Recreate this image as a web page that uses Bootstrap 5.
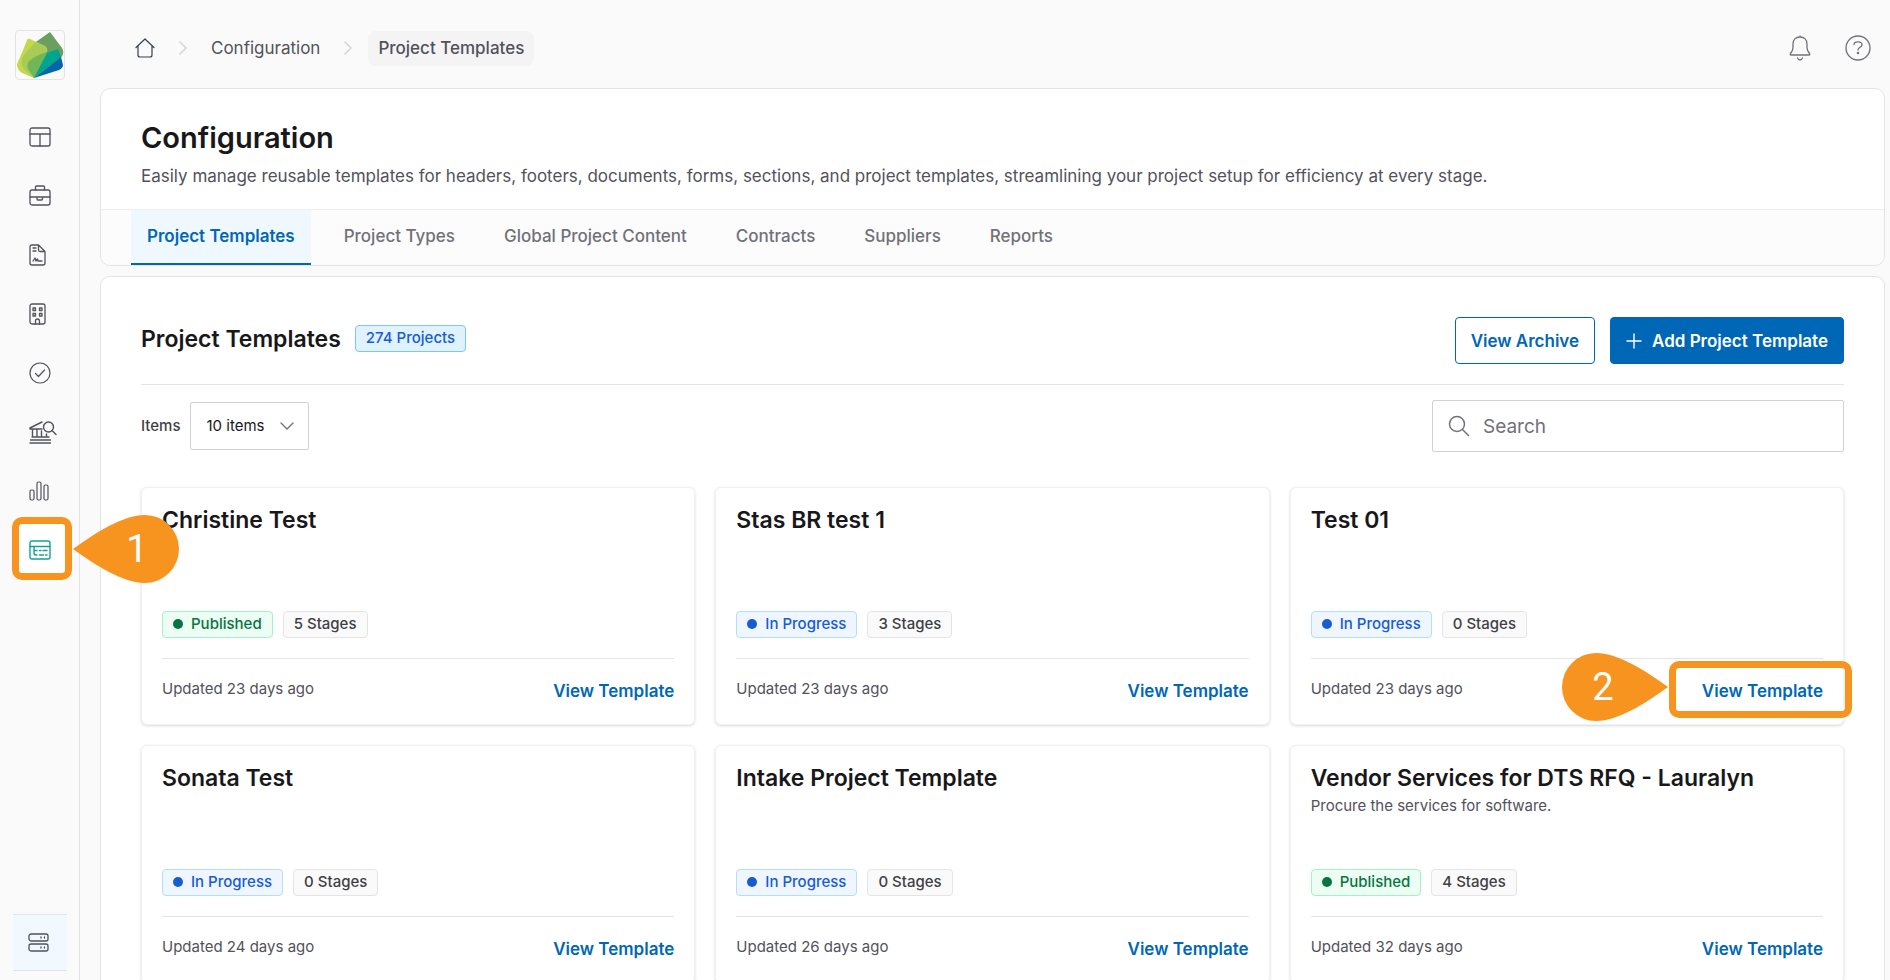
<!DOCTYPE html>
<html lang="en">
<head>
<meta charset="utf-8">
<meta name="viewport" content="width=device-width, initial-scale=1">
<title>Configuration – Project Templates</title>
<link href="https://cdn.jsdelivr.net/npm/bootstrap@5.3.0/dist/css/bootstrap.min.css" rel="stylesheet">
<style>
  :root { --brand: #0067b6; --ink: #18181b; --muted-ink: #52525b; --rule: #e4e4e7; --mark-orange: #f7941f; }
  body { font-family: Inter, "Liberation Sans", sans-serif; font-size: 17px; line-height: 24px; color: var(--muted-ink); background: #fafafa; }
  a { color: var(--brand); text-decoration: none; }
  svg { fill: none; stroke: currentColor; stroke-linecap: round; stroke-linejoin: round; display: block; flex: none; }
  .app { height: 100vh; overflow: hidden; }
  .side { width: 80px; flex: none; border-right: 1px solid var(--rule); padding: 30px 12px 9px; position: relative; z-index: 2; }
  .logo { width: 50px; height: 50px; border: 1px solid var(--rule); border-radius: 4px; margin-left: 3px; }
  .side-nav { margin-top: 27px; }
  .side-nav a { height: 59px; padding-left: 17px; display: flex; align-items: center; color: #52525b; position: relative; }
  .side-nav a.current { color: #10a58c; }
  .side-foot { height: 57px; width: 54px; margin-left: 1px; padding-left: 15px; background: #f1f8ff; border: solid var(--rule); border-width: 1px 0; color: #52525b; }
  .outline-box { position: absolute; border: 7px solid var(--mark-orange); border-radius: 10px; }
  .outline-nav { inset: -3px auto -1px 0; width: 60px; background: #fff; }
  .outline-link { inset: -18px -29px -15px -33px; }
  .callout-pin { position: absolute; width: 106px; height: 68px; color: #fff; font: 38px/68px Roboto, sans-serif; text-align: center; }
  .callout-pin svg { position: absolute; inset: 0; fill: var(--mark-orange); stroke: none; }
  .callout-pin span { position: relative; }
  .pin-nav { left: 61px; top: -5px; padding-left: 22px; }
  .pin-link { right: calc(100% + 34px); top: -26px; padding-right: 24px; }
  .topbar { height: 88px; padding: 0 14px 0 35px; }
  .crumb { gap: 24px; color: var(--muted-ink); }
  .crumb a { color: inherit; }
  .crumb-here { background: #f4f4f5; border-radius: 8px; padding: 5px 10px; margin-left: -8px; font-weight: 500; line-height: 25px; }
  .main-col { padding: 0 5px 0 20px; min-width: 0; }
  .panel { background: #fff; border: 1px solid var(--rule); border-radius: 10px; }
  .page-title { font-size: 29px; line-height: 36px; font-weight: 600; color: var(--ink); }
  .panel-head { padding: 31px 40px 20px; height: 120px; }
  .lede { margin: 8px 0 0; }
  .tabs { background: #fcfcfc; border-top: 1px solid #eeeef0; border-radius: 0 0 10px 10px; padding-left: 30px; gap: 17px; height: 56px; }
  .tabs a { padding: 0 16px; line-height: 53px; border-bottom: 2px solid transparent; font-weight: 500; color: #71717a; }
  .tabs a.active { background: #f0f8ff; color: var(--brand); border-color: var(--brand); font-weight: 600; }
  .list-panel { padding: 40px 40px 0; margin-top: 10px; }
  .list-head { padding-bottom: 20px; border-bottom: 1px solid var(--rule); height: 68px; }
  .sec-title { font-size: 23px; line-height: 28px; font-weight: 600; color: var(--ink); margin: 0; }
  .tag { border: 1px solid; border-radius: 4px; height: 27px; padding: 0 10px 2px; font-size: 15px; font-weight: 500; white-space: nowrap; display: inline-flex; align-items: center; gap: 8px; }
  .tag-count { background: #e0f2fe; border-color: #7cc4fa; color: #175cd3; }
  .tag-pub { background: #ecfdf3; border-color: #a6f0c6; color: #087443; }
  .tag-prog { background: #eff6ff; border-color: #b2ddff; color: #175cd3; }
  .tag-stage { background: #fafafa; border-color: var(--rule); color: #3f3f46; }
  .dot { width: 10px; height: 10px; border-radius: 50%; background: currentColor; }
  .btn-app { height: 47px; padding: 0 15px; border-radius: 4px; border: 1px solid var(--brand); font-weight: 600; color: var(--brand); background: #fff; display: inline-flex; align-items: center; gap: 10px; }
  .btn-app.solid { background: var(--brand); color: #fff; }
  .tools { padding-top: 15px; }
  .tools label { font-size: 15px; font-weight: 500; color: #3f3f46; }
  .items-wrap, .search-wrap { position: relative; }
  .items-select { width: 119px; height: 48px; border: 1px solid #d1d1d6; border-radius: 2px; padding: 0 15px; font-size: 15px; color: var(--ink); background: #fff; appearance: none; }
  .items-wrap svg { position: absolute; right: 15px; top: 20px; color: #71717a; pointer-events: none; }
  .search-wrap { width: 412px; }
  .search-wrap svg { position: absolute; left: 16px; top: 15px; color: #71717a; }
  .search-box { width: 100%; height: 52px; border: 1px solid #d1d1d6; border-radius: 2px; padding: 0 16px 0 50px; font-size: 19px; }
  .search-box::placeholder { color: #71717a; opacity: 1; }
  .cards { display: grid; grid-template-columns: repeat(3, minmax(0, 1fr)); gap: 20px; padding: 35px 0 20px; }
  .tpl { background: #fff; border: 1px solid #f1f1f3; border-radius: 6px; box-shadow: 0 1px 3px rgba(16,24,40,.16); padding: 18px 20px 20px; height: 238px; }
  .tpl h3 { font-size: 23px; line-height: 28px; font-weight: 600; color: var(--ink); margin: 0; }
  .tpl-top { height: 105px; }
  .tpl-top p { font-size: 15px; line-height: 28px; margin: 0; }
  .tpl-foot { border-top: 1px solid var(--rule); margin-top: 20px; padding-top: 18px; font-size: 15px; }
  .tpl-foot .go { font-size: 17px; font-weight: 600; position: relative; margin-top: 2px; }
</style>
</head>
<body>
<div class="app d-flex">
  <aside class="side d-flex flex-column">
    <a class="logo" href="#" aria-label="Home">
      <svg width="48" height="48" viewBox="0 0 48 48" stroke-width="0">
        <path fill="#6a9f5f" d="M34 1 46 17Q49 22 45 27L18 47 17 13Z"/>
        <path fill="#c5d74f" d="M14 8 29 15Q32 17 31 21L18 47 6 42Q1 39 1 33Q7 20 11 9Q12 7 14 8Z"/>
        <path fill="#a7cb55" d="M19 11 29 15Q32 18 30 23L18 47 8 38Q3 32 8 24Z"/>
        <path fill="#72b657" d="M31 21Q24 23 17 27Q9 32 12 38L18 47 31 25Z"/>
        <path fill="#0564ae" d="M45 26 47 34Q47 37 43 39L18 47Z"/>
        <path fill="#00a58d" d="M31 22 42 18 45 26 18 47Z"/>
      </svg>
    </a>
    <nav class="side-nav" aria-label="Main">
      <a href="#" aria-label="Dashboard"><svg width="22" height="20" viewBox="0 0 22 20" stroke-width="1.300"><rect x="1" y="1" width="20" height="18" rx="2"/><path d="M1 7h20M11 7v12"/></svg></a>
      <a href="#" aria-label="Projects"><svg width="22" height="21" viewBox="0 0 22 21" stroke-width="1.300"><rect x="1" y="5" width="20" height="15" rx="2"/><path d="M6.500 5V2q0-1 1-1h7q1 0 1 1v3M1 12h20M8 12v2q0 1 1 1h3.500q1 0 1-1v-2"/></svg></a>
      <a href="#" aria-label="Documents"><svg width="17" height="22" viewBox="0 0 17 22" stroke-width="1.300"><path d="M9.500 1H3Q1 1 1 3v16q0 2 2 2h11q2 0 2-2V7.500L9.500 1v5q0 1.500 1.500 1.500h5M4 4h3M4 7h3M4 17l2-3 1 3 1.500-2 .5 2h4"/></svg></a>
      <a href="#" aria-label="Organisations"><svg width="17" height="22" viewBox="0 0 17 22" stroke-width="1.300"><rect x="1" y="1" width="15" height="20" rx="2"/><path d="M4 5h2.500v2.500H4zM10.500 5H13v2.500h-2.500zM4 10.500h2.500V13H4zM10.500 10.500H13V13h-2.500zM6.500 21v-3q0-2 2-2t2 2v3"/></svg></a>
      <a href="#" aria-label="Approvals"><svg width="22" height="22" viewBox="0 0 22 22" stroke-width="1.200"><circle cx="11" cy="11" r="10"/><path d="m6.500 11.500 3 3 6-6.500"/></svg></a>
      <a href="#" aria-label="Public search"><svg width="28" height="24" viewBox="0 0 28 24" stroke-width="1.400"><circle cx="19.500" cy="7" r="5"/><path d="m23.500 11 3.500 3.500M13 2 1 8v1h12M3.500 9v7M8 10v6M12.500 11v5M17.500 14v2M3 17h17M1.500 20h20M1 23h20.500"/></svg></a>
      <a href="#" aria-label="Analytics"><svg width="20" height="20" viewBox="0 0 20 20" stroke-width="1.200"><rect x="1" y="9" width="4" height="10" rx="1.500"/><rect x="8" y="1" width="4" height="18" rx="1.500"/><rect x="15" y="4" width="4" height="15" rx="1.500"/></svg></a>
      <a href="#" class="current" aria-label="Configuration" aria-current="page">
        <span class="outline-box outline-nav"></span>
        <svg class="position-relative" width="22" height="20" viewBox="0 0 22 20" stroke-width="1.400"><rect x="1" y="1" width="20" height="18" rx="2"/><path d="M1 6.500h20M5 7v6q0 2 2 2h1M5 10.500h3M10.500 10.500h1.500M14 10.500h4M10.500 15h4M16.500 15h1.500"/></svg>
        <span class="callout-pin pin-nav"><svg width="106" height="68" viewBox="0 0 106 68"><path d="M0 34C22 18 50 0 72 0A34 34 0 0 1 72 68C50 68 22 50 0 34Z"/></svg><span>1</span></span>
      </a>
    </nav>
    <a class="side-foot mt-auto d-flex align-items-center" href="#" aria-label="Servers"><svg width="21" height="19" viewBox="0 0 21 19" stroke-width="1.300"><rect x="1" y="1" width="19" height="7" rx="2"/><rect x="1" y="11" width="19" height="7" rx="2"/><path d="M13 4v1M16.500 4v1M13 14v1M16.500 14v1"/></svg></a>
  </aside>

  <div class="main-col flex-grow-1">
    <header class="topbar d-flex align-items-center justify-content-between">
      <nav aria-label="breadcrumb">
        <ol class="crumb list-unstyled d-flex align-items-center m-0 pt-2">
          <li><a href="#" aria-label="Home"><svg width="20" height="20" viewBox="0 0 20 20" stroke-width="1.200" color="#344054"><path d="M1 9.500 10 1l9 8.500M3 8v9q0 2 2 2h10q2 0 2-2V8"/></svg></a></li>
          <li aria-hidden="true"><svg width="8" height="14" viewBox="0 0 8 14" stroke-width="1.400" color="#d1d1d6"><path d="m1 1 6 6-6 6"/></svg></li>
          <li><a href="#">Configuration</a></li>
          <li aria-hidden="true"><svg width="8" height="14" viewBox="0 0 8 14" stroke-width="1.400" color="#d1d1d6"><path d="m1 1 6 6-6 6"/></svg></li>
          <li class="crumb-here" aria-current="page">Project Templates</li>
        </ol>
      </nav>
      <div class="d-flex align-items-center pt-2" style="gap:34px;color:#71717a">
        <a href="#" class="text-reset" aria-label="Notifications"><svg width="22" height="26" viewBox="0 0 22 26" stroke-width="1.300"><path d="M11 1v1M11 2C6.500 2 4 5 4 9v3q0 3-1.500 5L1.200 18.800Q1 20 2 20h18q1 0 .8-1.200L19.500 17Q18 15 18 12V9c0-4-2.500-7-7-7ZM8.500 23q1 2 2.500 2t2.500-2"/></svg></a>
        <a href="#" class="text-reset" aria-label="Help"><svg width="26" height="26" viewBox="0 0 26 26" stroke-width="1.300"><circle cx="13" cy="13" r="12"/><path d="M9 9.500C9.300 6 17 6 17 9.700 17 12.500 13 12 13 15"/><circle cx="13" cy="18" r=".6" fill="currentColor"/></svg></a>
      </div>
    </header>

    <section class="panel">
      <div class="panel-head">
        <h1 class="page-title m-0">Configuration</h1>
        <p class="lede">Easily manage reusable templates for headers, footers, documents, forms, sections, and project templates, streamlining your project setup for efficiency at every stage.</p>
      </div>
      <nav class="tabs nav" aria-label="Configuration sections">
        <a class="active" aria-current="page" href="#">Project Templates</a>
        <a href="#">Project Types</a>
        <a href="#">Global Project Content</a>
        <a href="#">Contracts</a>
        <a href="#">Suppliers</a>
        <a href="#">Reports</a>
      </nav>
    </section>

    <section class="panel list-panel">
      <div class="list-head d-flex justify-content-between">
        <div class="d-flex align-items-center pb-1" style="gap:14px">
          <h2 class="sec-title">Project Templates</h2>
          <span class="tag tag-count">274 Projects</span>
        </div>
        <div class="d-flex" style="gap:15px">
          <button type="button" class="btn-app">View Archive</button>
          <button type="button" class="btn-app solid"><svg width="16" height="16" viewBox="0 0 16 16" stroke-width="1.400"><path d="M8 1v14M1 8h14"/></svg>Add Project Template</button>
        </div>
      </div>
      <div class="tools d-flex justify-content-between align-items-center">
        <div class="d-flex align-items-center" style="gap:10px">
          <label for="items">Items</label>
          <div class="items-wrap">
            <select id="items" class="items-select"><option>10 items</option><option>20 items</option><option>50 items</option></select>
            <svg width="14" height="8" viewBox="0 0 14 8" stroke-width="1.400"><path d="m1 1 6 6 6-6"/></svg>
          </div>
        </div>
        <div class="search-wrap">
          <svg width="22" height="22" viewBox="0 0 22 22" stroke-width="1.500"><circle cx="9" cy="9" r="7.500"/><path d="m14.500 14.500 6 6"/></svg>
          <input class="search-box" type="search" placeholder="Search" aria-label="Search">
        </div>
      </div>

      <div class="cards">
        <article class="tpl">
          <div class="tpl-top"><h3>Christine Test</h3></div>
          <div class="d-flex" style="gap:10px"><span class="tag tag-pub"><i class="dot"></i>Published</span><span class="tag tag-stage">5 Stages</span></div>
          <div class="tpl-foot d-flex justify-content-between"><span>Updated 23 days ago</span><a class="go" href="#">View Template</a></div>
        </article>
        <article class="tpl">
          <div class="tpl-top"><h3>Stas BR test 1</h3></div>
          <div class="d-flex" style="gap:10px"><span class="tag tag-prog"><i class="dot"></i>In Progress</span><span class="tag tag-stage">3 Stages</span></div>
          <div class="tpl-foot d-flex justify-content-between"><span>Updated 23 days ago</span><a class="go" href="#">View Template</a></div>
        </article>
        <article class="tpl">
          <div class="tpl-top"><h3>Test 01</h3></div>
          <div class="d-flex" style="gap:10px"><span class="tag tag-prog"><i class="dot"></i>In Progress</span><span class="tag tag-stage">0 Stages</span></div>
          <div class="tpl-foot d-flex justify-content-between"><span>Updated 23 days ago</span><a class="go" href="#">View Template<span class="outline-box outline-link"></span><span class="callout-pin pin-link"><svg width="106" height="68" viewBox="0 0 106 68"><path d="M106 34C84 18 56 0 34 0A34 34 0 0 0 34 68C56 68 84 50 106 34Z"/></svg><span>2</span></span></a></div>
        </article>
        <article class="tpl">
          <div class="tpl-top"><h3>Sonata Test</h3></div>
          <div class="d-flex" style="gap:10px"><span class="tag tag-prog"><i class="dot"></i>In Progress</span><span class="tag tag-stage">0 Stages</span></div>
          <div class="tpl-foot d-flex justify-content-between"><span>Updated 24 days ago</span><a class="go" href="#">View Template</a></div>
        </article>
        <article class="tpl">
          <div class="tpl-top"><h3>Intake Project Template</h3></div>
          <div class="d-flex" style="gap:10px"><span class="tag tag-prog"><i class="dot"></i>In Progress</span><span class="tag tag-stage">0 Stages</span></div>
          <div class="tpl-foot d-flex justify-content-between"><span>Updated 26 days ago</span><a class="go" href="#">View Template</a></div>
        </article>
        <article class="tpl">
          <div class="tpl-top"><h3>Vendor Services for DTS RFQ - Lauralyn</h3><p>Procure the services for software.</p></div>
          <div class="d-flex" style="gap:10px"><span class="tag tag-pub"><i class="dot"></i>Published</span><span class="tag tag-stage">4 Stages</span></div>
          <div class="tpl-foot d-flex justify-content-between"><span>Updated 32 days ago</span><a class="go" href="#">View Template</a></div>
        </article>
      </div>
    </section>
  </div>
</div>
<script src="https://cdn.jsdelivr.net/npm/bootstrap@5.3.0/dist/js/bootstrap.bundle.min.js"></script>
</body>
</html>
